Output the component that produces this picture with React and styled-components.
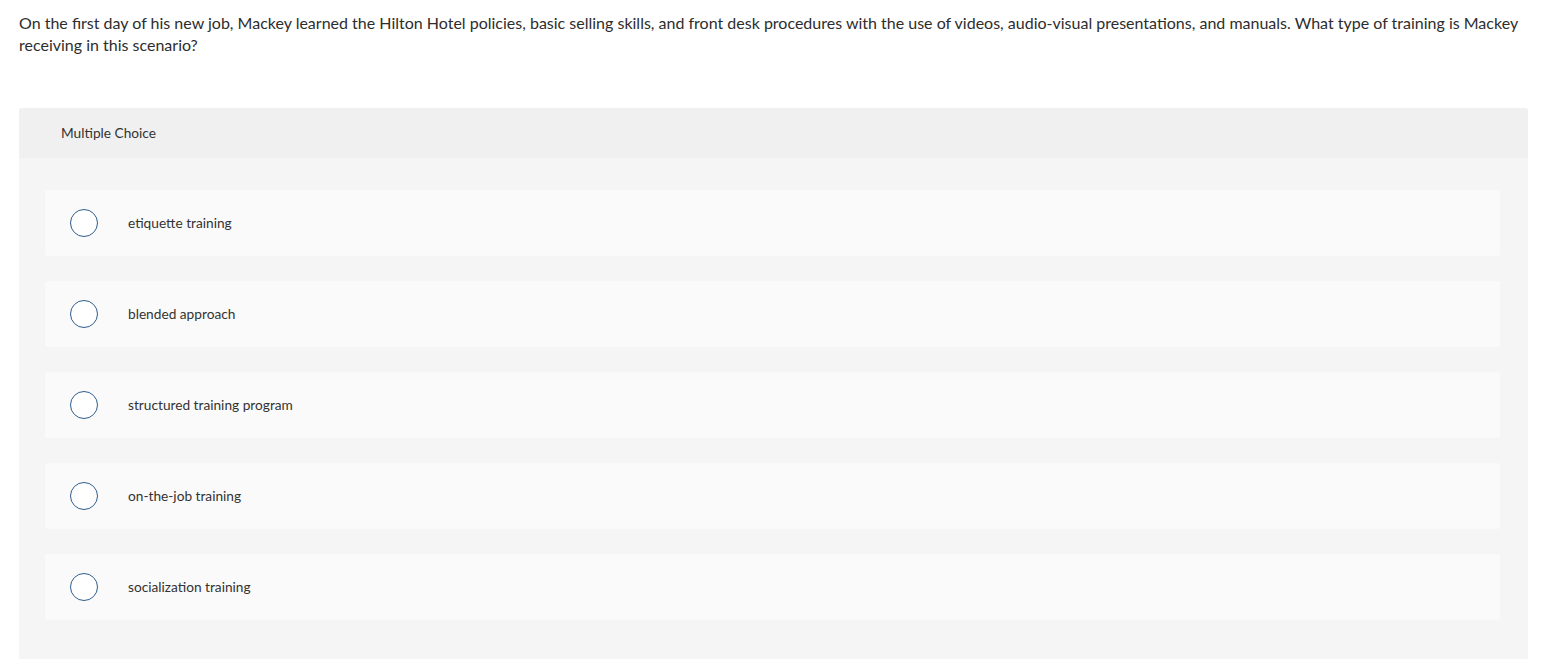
import React from "react";
import styled, { createGlobalStyle } from "styled-components";

const GlobalStyle = createGlobalStyle`
  body {
    margin: 0;
    background: #ffffff;
    font-family: "Lato", "Open Sans", sans-serif;
  }
`;

const choices = [
  "etiquette training",
  "blended approach",
  "structured training program",
  "on-the-job training",
  "socialization training",
];

const App = () => {
  return (
    <Page>
      <GlobalStyle />
      <Question>
        On the first day of his new job, Mackey learned the Hilton Hotel
        policies, basic selling skills, and front desk procedures with the use
        of videos, audio-visual presentations, and manuals. What type of
        training is Mackey receiving in this scenario?
      </Question>
      <Panel>
        <PanelHeader>Multiple Choice</PanelHeader>
        <ChoiceList>
          {choices.map((c) => (
            <Choice key={c}>
              <Radio />
              <ChoiceText>{c}</ChoiceText>
            </Choice>
          ))}
        </ChoiceList>
      </Panel>
    </Page>
  );
};

const Page = styled.div`
  padding: 12px 40px 40px 19px;
`;

const Question = styled.p`
  margin: 0;
  color: #2d2d2d;
  font-size: 16px;
  line-height: 22px;
  max-width: 1512px;
`;

const Panel = styled.div`
  margin-top: 52px;
  width: 1509px;
  background: #f5f5f5;
  border-radius: 3px;
`;

const PanelHeader = styled.div`
  height: 50px;
  display: flex;
  align-items: center;
  padding-left: 42px;
  padding-bottom: 1px;
  box-sizing: border-box;
  background: #f0f0f0;
  border-radius: 3px 3px 0 0;
  color: #333333;
  font-size: 13.7px;
`;

const ChoiceList = styled.div`
  display: flex;
  flex-direction: column;
  gap: 25px;
  padding: 32px 28px 40px 26px;
`;

const Choice = styled.div`
  height: 66px;
  display: flex;
  align-items: center;
  background: #fafafa;
  border-radius: 3px;
  padding-left: 25px;
`;

const Radio = styled.span`
  width: 26px;
  height: 26px;
  border: 1.5px solid #2f5d8c;
  border-radius: 50%;
  background: #ffffff;
  flex-shrink: 0;
`;

const ChoiceText = styled.span`
  margin-left: 30px;
  margin-bottom: 1px;
  color: #333333;
  font-size: 13.7px;
`;

export default App;
